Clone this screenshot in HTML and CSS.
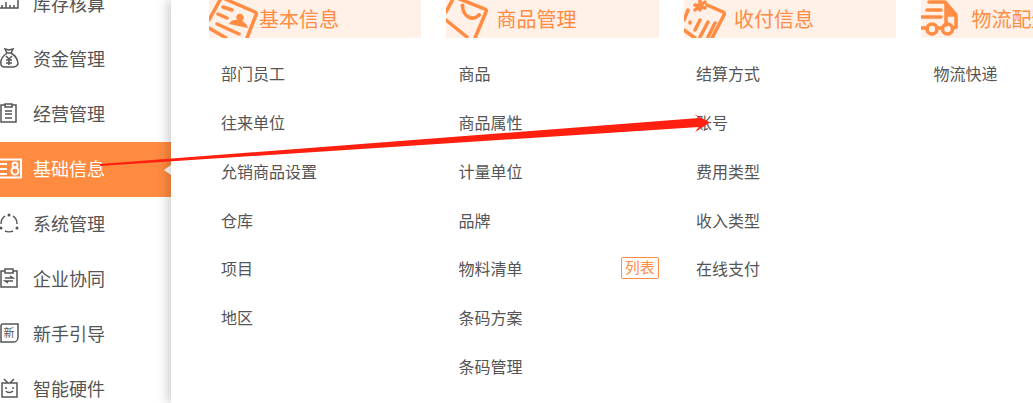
FILE: index.html
```html
<!DOCTYPE html>
<html lang="zh-CN">
<head>
  <meta charset="UTF-8">
  <title>基础信息</title>
  <link rel="stylesheet" href="styles.css">
</head>
<body>

<div class="page">
  <!-- 左侧菜单 -->
  <ul class="side-nav">
    <li class="nav-item">
      <svg class="nav-icon" viewBox="0 0 20 20"><path d="M18 2v13H-2M2 12v3M6 9v6M10 12v3M14 12v3"/></svg>
      <span>库存核算</span>
    </li>
    <li class="nav-item">
      <svg class="nav-icon" viewBox="0 0 20 20"><path d="M5 1l4 1 4-1-2 4H7zM7 5C3 8 0 12 1 16c0 2 2 3 4 3h8c2 0 4-1 5-3 0-4-2-8-7-11M6 8l3 3 3-3M6 12h6M6 15h6M9 11v6"/></svg>
      <span>资金管理</span>
    </li>
    <li class="nav-item">
      <svg class="nav-icon" viewBox="0 0 20 20"><path d="M5 2H1v17h15V2h-4M5 1h7v3H5zM5 8h7M5 11h7M5 15h7"/></svg>
      <span>经营管理</span>
    </li>
    <li class="nav-item active">
      <svg class="nav-icon" viewBox="0 0 20 20"><path d="M-2 1.500h23v18H-2zM0 6h7M0 11h7M0 16h7"/><circle cx="15" cy="7" r="2.500"/><circle cx="15" cy="13" r="3.500"/></svg>
      <span>基础信息</span>
      <i class="nav-arrow"></i>
    </li>
    <li class="nav-item">
      <svg class="nav-icon" viewBox="0 0 20 20"><path d="M5 3C2 5 1 8 1 11M13 3c3 2 4 5 4 8M5 18c2 1 6 1 8 0"/><circle class="dot" cx="9" cy="2" r="1.500"/><circle class="dot" cx="1" cy="15" r="1.500"/><circle class="dot" cx="17" cy="15" r="1.500"/></svg>
      <span>系统管理</span>
    </li>
    <li class="nav-item">
      <svg class="nav-icon" viewBox="0 0 20 20"><path d="M5 3H1v16h16V3h-4M5 1h8v4H5zM5 10h8l-3-2M13 13H5l3 2"/></svg>
      <span>企业协同</span>
    </li>
    <li class="nav-item">
      <svg class="nav-icon" viewBox="0 0 20 20"><path d="M3 1h15v13c0 3-2 5-4 5H1V3c0-1 1-2 2-2z"/><text x="3.500" y="14" class="icon-text">新</text></svg>
      <span>新手引导</span>
    </li>
    <li class="nav-item">
      <svg class="nav-icon" viewBox="0 0 20 20"><path d="M4 1l4 4M14 1l-4 4M2 5h15v14H2zM6 13c1 2 5 2 7 0"/><circle class="dot" cx="6" cy="10" r="1"/><circle class="dot" cx="13" cy="10" r="1"/></svg>
      <span>智能硬件</span>
    </li>
  </ul>

  <!-- 右侧面板 -->
  <div class="panel">
    <div class="col">
      <div class="col-head">
        <svg class="head-icon" viewBox="0 0 50 38"><path d="M11 0L0 20M16-1l30 13q2 1 1 3L38 38M0 28l17 10M14 7l9 3M9 14l9 4M8 24l22 10"/><path class="fill" d="M20 24c2-4 5-4 8-4-2-4 1-7 4-6 3 1 4 5 1 7 2 1 5 3 6 7z"/></svg>
        <span>基本信息</span>
      </div>
      <a class="link">部门员工</a>
      <a class="link">往来单位</a>
      <a class="link">允销商品设置</a>
      <a class="link">仓库</a>
      <a class="link">项目</a>
      <a class="link">地区</a>
    </div>
    <div class="col">
      <div class="col-head">
        <svg class="head-icon" viewBox="0 0 50 38"><path d="M11-2l28 11q2 1 1 3L29 38M0 20l21 17M7-1L0 12M16.500 6C17 16 26 22 33 15"/><circle class="fill" cx="16.500" cy="5.500" r="2"/><circle class="fill" cx="33" cy="15" r="2"/></svg>
        <span>商品管理</span>
      </div>
      <a class="link">商品</a>
      <a class="link">商品属性</a>
      <a class="link">计量单位</a>
      <a class="link">品牌</a>
      <a class="link with-tag">物料清单<em class="tag">列表</em></a>
      <a class="link">条码方案</a>
      <a class="link">条码管理</a>
    </div>
    <div class="col">
      <div class="col-head">
        <svg class="head-icon" viewBox="0 0 50 38"><path d="M23 5l16 7q2 1 1 3L28 38M4 10L0 20M0 30l11 8M16 0v10M11 5l10 3M21 2L11 10M6 22v1M16 20l-5 10M24 22l-8 15M31 23l-7 14"/></svg>
        <span>收付信息</span>
      </div>
      <a class="link">结算方式</a>
      <a class="link">账号</a>
      <a class="link">费用类型</a>
      <a class="link">收入类型</a>
      <a class="link">在线支付</a>
    </div>
    <div class="col">
      <div class="col-head">
        <svg class="head-icon" viewBox="0 0 50 38"><path d="M8 2h15q2 0 2 2v21M25 3l10 12v12l-3 1M25 8l7 7H25M6 10h14M1 17h19M1 28h5M16 28h5"/><circle cx="11" cy="29" r="5"/><circle cx="26.500" cy="29" r="5"/></svg>
        <span>物流配送</span>
      </div>
      <a class="link">物流快递</a>
    </div>
  </div>

  <!-- 标注箭头 -->
  <svg class="mark" viewBox="0 0 1033 403"><polygon points="100,164 699,118 694,114 710,122.500 695,132 699,127 100,166"/></svg>
</div>

</body>
</html>
```

FILE: styles.css
```css
* { box-sizing: border-box; }
html, body { margin: 0; padding: 0; }
body { font-family: "Liberation Sans", "Noto Sans CJK SC", sans-serif; background: #fff; }
.page { position: relative; display: flex; width: 1033px; height: 403px; overflow: hidden; }

.side-nav { flex: 0 0 171px; margin: -23px 0 0; padding: 0; list-style: none; }
.nav-item { position: relative; display: flex; align-items: center; height: 55px; padding-bottom: 4px; color: #555; font-size: 18px; }
.nav-item.active { background: #ff8b40; color: #fff; }
.nav-icon { flex: 0 0 20px; width: 20px; height: 20px; margin-right: 13px; fill: none; stroke: #555; stroke-width: 1.500; overflow: hidden; }
.nav-icon .dot { fill: #555; stroke: none; }
.nav-icon .icon-text { font-size: 11px; fill: #555; stroke: none; }
.active .nav-icon { stroke: #fff; stroke-width: 2; overflow: visible; }
.nav-arrow { position: absolute; right: 0; top: 50%; margin-top: -5px; border: 5px solid transparent; border-right: 7px solid #fff; border-left: 0; }

.panel { position: relative; flex: 1; display: flex; gap: 25.300px; padding-left: 38px; background: #fff; box-shadow: -4px 0 10px rgba(0, 0, 0, 0.18); }
.col { flex: 0 0 212.200px; }
.col-head { display: flex; align-items: center; height: 38px; margin-bottom: 13px; background: #fff0e8; color: #ff8c42; font-size: 20px; white-space: nowrap; }
.col-head span { padding-bottom: 2px; }
.head-icon { flex: 0 0 50px; width: 50px; height: 38px; fill: none; stroke: #ff8c42; stroke-width: 3.500; stroke-linecap: round; }
.head-icon .fill { fill: #ff8c42; stroke: none; }
.link { display: flex; align-items: center; height: 48.750px; padding: 0 0 4px 12px; color: #555; font-size: 16px; }
.with-tag { justify-content: space-between; }
.tag { padding: 0 3px; height: 22px; line-height: 19px; border: 1px solid #ff8c42; border-radius: 2px; color: #ff8c42; font-size: 15px; font-style: normal; }

.mark { position: absolute; left: 0; top: 0; width: 1033px; height: 403px; pointer-events: none; }
.mark polygon { fill: #ff2010; }
```
